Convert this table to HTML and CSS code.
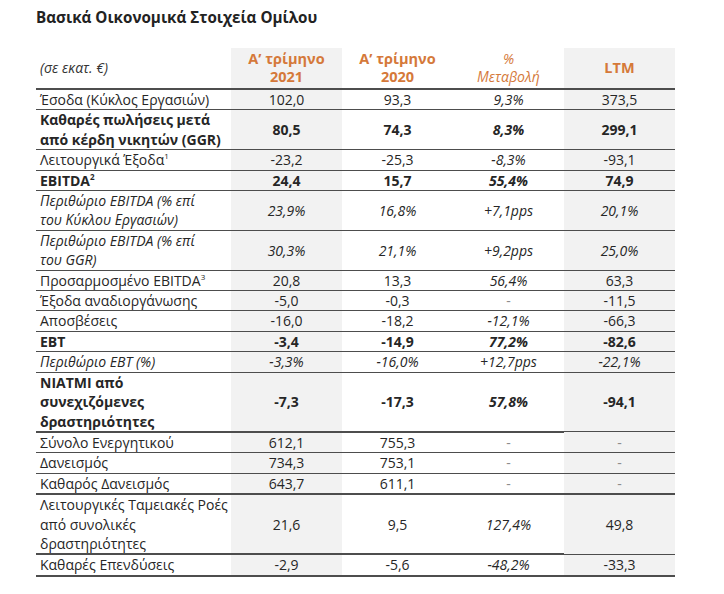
FILE: index.html
```html
<!DOCTYPE html>
<html lang="el">
<head>
<meta charset="utf-8">
<title>Βασικά Οικονομικά Στοιχεία Ομίλου</title>
<link rel="stylesheet" href="styles.css">
</head>
<body>
<div class="page">
  <h1 class="title">Βασικά Οικονομικά Στοιχεία Ομίλου</h1>
  <table class="fin">
    <colgroup>
      <col class="c-label">
      <col class="c-num">
      <col class="c-num">
      <col class="c-num">
      <col class="c-num">
    </colgroup>
    <thead>
      <tr>
        <th class="lab unit">(σε εκατ. €)</th>
        <th class="shade hd">Α’ τρίμηνο<br>2021</th>
        <th class="hd">Α’ τρίμηνο<br>2020</th>
        <th class="hd pct">%<br>Μεταβολή</th>
        <th class="shade hd">LTM</th>
      </tr>
    </thead>
    <tbody>
      <tr>
        <td class="lab">Έσοδα (Κύκλος Εργασιών)</td>
        <td class="shade">102,0</td><td>93,3</td><td class="it">9,3%</td><td class="shade">373,5</td>
      </tr>
      <tr class="b">
        <td class="lab">Καθαρές πωλήσεις μετά<br>από κέρδη νικητών (GGR)</td>
        <td class="shade">80,5</td><td>74,3</td><td class="it">8,3%</td><td class="shade">299,1</td>
      </tr>
      <tr>
        <td class="lab">Λειτουργικά Έξοδα<sup>1</sup></td>
        <td class="shade">-23,2</td><td>-25,3</td><td class="it">-8,3%</td><td class="shade">-93,1</td>
      </tr>
      <tr class="b">
        <td class="lab">EBITDA<sup>2</sup></td>
        <td class="shade">24,4</td><td>15,7</td><td class="it">55,4%</td><td class="shade">74,9</td>
      </tr>
      <tr class="i">
        <td class="lab">Περιθώριο EBITDA (% επί<br>του Κύκλου Εργασιών)</td>
        <td class="shade">23,9%</td><td>16,8%</td><td>+7,1pps</td><td class="shade">20,1%</td>
      </tr>
      <tr class="i">
        <td class="lab">Περιθώριο EBITDA (% επί<br>του GGR)</td>
        <td class="shade">30,3%</td><td>21,1%</td><td>+9,2pps</td><td class="shade">25,0%</td>
      </tr>
      <tr>
        <td class="lab">Προσαρμοσμένο EBITDA<sup>3</sup></td>
        <td class="shade">20,8</td><td>13,3</td><td class="it">56,4%</td><td class="shade">63,3</td>
      </tr>
      <tr>
        <td class="lab">Έξοδα αναδιοργάνωσης</td>
        <td class="shade">-5,0</td><td>-0,3</td><td class="dash">-</td><td class="shade">-11,5</td>
      </tr>
      <tr>
        <td class="lab">Αποσβέσεις</td>
        <td class="shade">-16,0</td><td>-18,2</td><td class="it">-12,1%</td><td class="shade">-66,3</td>
      </tr>
      <tr class="b">
        <td class="lab">EBT</td>
        <td class="shade">-3,4</td><td>-14,9</td><td class="it">77,2%</td><td class="shade">-82,6</td>
      </tr>
      <tr class="i">
        <td class="lab">Περιθώριο EBT (%)</td>
        <td class="shade">-3,3%</td><td>-16,0%</td><td>+12,7pps</td><td class="shade">-22,1%</td>
      </tr>
      <tr class="b thick-part">
        <td class="lab">NIATMI από<br>συνεχιζόμενες<br>δραστηριότητες</td>
        <td class="shade">-7,3</td><td>-17,3</td><td class="it">57,8%</td><td class="shade">-94,1</td>
      </tr>
      <tr>
        <td class="lab">Σύνολο Ενεργητικού</td>
        <td class="shade">612,1</td><td>755,3</td><td class="dash">-</td><td class="shade dash">-</td>
      </tr>
      <tr>
        <td class="lab">Δανεισμός</td>
        <td class="shade">734,3</td><td>753,1</td><td class="dash">-</td><td class="shade dash">-</td>
      </tr>
      <tr class="thick">
        <td class="lab">Καθαρός Δανεισμός</td>
        <td class="shade">643,7</td><td>611,1</td><td class="dash">-</td><td class="shade dash">-</td>
      </tr>
      <tr class="thick-part">
        <td class="lab">Λειτουργικές Ταμειακές Ροές<br>από συνολικές<br>δραστηριότητες</td>
        <td class="shade">21,6</td><td>9,5</td><td class="it">127,4%</td><td class="shade">49,8</td>
      </tr>
      <tr class="thick">
        <td class="lab">Καθαρές Επενδύσεις</td>
        <td class="shade">-2,9</td><td>-5,6</td><td class="it">-48,2%</td><td class="shade">-33,3</td>
      </tr>
    </tbody>
  </table>
</div>
</body>
</html>
```

FILE: styles.css
```css
html, body {
  margin: 0;
  padding: 0;
  background: #ffffff;
}

body {
  font-family: "Open Sans", "DejaVu Sans", sans-serif;
  color: #262626;
}

.page {
  padding: 8px 0 0 36px;
}

.title {
  margin: 0 0 21px 0;
  font-size: 15.2px;
  line-height: 19px;
  font-weight: 700;
  color: #222222;
}

.fin {
  border-collapse: collapse;
  table-layout: fixed;
  width: 639px;
  font-size: 14px;
}

.c-label { width: 195px; }
.c-num { width: 111px; }

.fin th,
.fin td {
  padding: 0;
  text-align: center;
  vertical-align: middle;
  line-height: 19.4px;
  border-bottom: 1px solid #4d4d4d;
}

.fin td.lab,
.fin th.lab {
  text-align: left;
  padding-left: 4px;
}

.fin thead th {
  height: 40px;
  line-height: 18px;
  border-bottom: 2px solid #4d4d4d;
  font-size: 14.5px;
}

.fin th.unit {
  font-weight: 400;
  font-style: italic;
  font-size: 14px;
  color: #333333;
}

.fin th.hd {
  color: #d5793a;
  font-weight: 700;
}

.fin th.pct {
  font-weight: 400;
  font-style: italic;
  font-size: 14px;
}

.shade {
  background: #f2f2f2;
}

.b td { font-weight: 700; }
.i td { font-style: italic; }
.it { font-style: italic; }

.dash {
  color: #8c8c8c;
}

sup {
  font-size: 8px;
  line-height: 0;
  vertical-align: 6px;
}

.thick td {
  border-bottom: 2px solid #4d4d4d;
}

.thick-part td {
  border-bottom: 2px solid #4d4d4d;
}

.thick-part td:last-child {
  border-bottom: 1px solid #4d4d4d;
}
```
